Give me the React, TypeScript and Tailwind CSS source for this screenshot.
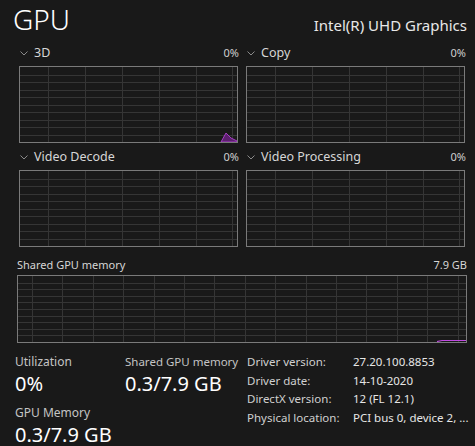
const FONT = "font-['Segoe_UI','Noto_Sans','Open_Sans',sans-serif]";

function Grid({
  w,
  h,
  cols,
  rows,
  children,
}: {
  w: number;
  h: number;
  cols: number[];
  rows: number;
  children?: React.ReactNode;
}) {
  const step = h / rows;
  return (
    <svg width={w} height={h} className="block">
      {Array.from({ length: rows - 1 }, (_, i) => (
        <line key={"r" + i} x1={0} x2={w} y1={Math.round((i + 1) * step) + 0.5} y2={Math.round((i + 1) * step) + 0.5} stroke="#353535" strokeWidth={1} />
      ))}
      {cols.map((x, i) => (
        <line key={"c" + i} x1={x + 0.5} x2={x + 0.5} y1={0} y2={h} stroke="#353535" strokeWidth={1} />
      ))}
      {children}
    </svg>
  );
}

function Chevron() {
  return (
    <svg width="8" height="5" viewBox="0 0 8 5" className="mr-[6px] mt-[1px]">
      <path d="M0.5 0.5 L4 4 L7.5 0.5" fill="none" stroke="#8a8a8a" strokeWidth="1" />
    </svg>
  );
}

const smallCols = [28, 65, 102, 139, 176, 212];

function Engine({ name, spike }: { name: string; spike?: boolean }) {
  return (
    <div className="w-[219px]">
      <div className="flex items-center justify-between h-[18px] mb-[4px]">
        <div className="flex items-center pl-[1px]">
          <Chevron />
          <span className="text-[12.5px] text-[#d6d6d6]">{name}</span>
        </div>
        <span className="text-[11px] text-[#cfcfcf] -mr-[1px]">0%</span>
      </div>
      <div className="border border-[#7a7a7a] w-[219px] h-[77px] overflow-hidden">
        <Grid w={217} h={75} cols={smallCols} rows={10}>
          {spike && (
            <path d="M201 75 L206 66 L211 71 L217 74 L217 75 Z" fill="#5c1f6e" stroke="#a43fc4" strokeWidth="1" />
          )}
        </Grid>
      </div>
    </div>
  );
}

const sharedCols = Array.from({ length: 15 }, (_, i) => Math.round(14 + i * 30.4));

export default function App() {
  return (
    <div className={`w-[475px] h-[446px] bg-[#191919] text-white overflow-hidden ${FONT}`}>
      {/* header */}
      <div className="flex items-end justify-between pl-[13px] pr-[8px] pt-[1px] h-[37px]">
        <span className="text-[28px] leading-[36px] font-light text-white">GPU</span>
        <span className="text-[15px] leading-[24px] text-[#e8e8e8]">Intel(R) UHD Graphics</span>
      </div>

      {/* engines */}
      <div className="grid grid-cols-[219px_219px] gap-x-[8px] gap-y-[5px] pl-[19px] mt-[7px]">
        <Engine name="3D" spike />
        <Engine name="Copy" />
        <Engine name="Video Decode" />
        <Engine name="Video Processing" />
      </div>

      {/* shared memory */}
      <div className="pl-[17px] w-[467px] mt-[9px]">
        <div className="flex items-center justify-between h-[18px] mb-[1px]">
          <span className="text-[11px] text-[#d6d6d6]">Shared GPU memory</span>
          <span className="text-[11px] text-[#d6d6d6]">7.9 GB</span>
        </div>
        <div className="border border-[#7a7a7a] w-[450px] h-[68px] overflow-hidden">
          <Grid w={448} h={66} cols={sharedCols} rows={10}>
            <path d="M419 65.5 L424 64.5 L448 64.5" fill="none" stroke="#c04ae0" strokeWidth="1.2" />
          </Grid>
        </div>
      </div>

      {/* stats */}
      <div className="flex items-start mt-[10px] pl-[15px]">
        <div className="w-[110px]">
          <div className="text-[12px] leading-[18px] text-[#c4c4c4]">Utilization</div>
          <div className="text-[20px] leading-[26px] text-white mb-[7px]">0%</div>
          <div className="text-[12px] leading-[18px] text-[#c4c4c4]">GPU Memory</div>
          <div className="text-[20px] leading-[26px] text-white">0.3/7.9 GB</div>
        </div>
        <div className="w-[122px]">
          <div className="text-[11.5px] leading-[18px] text-[#c4c4c4]">Shared GPU memory</div>
          <div className="text-[20px] leading-[26px] text-white">0.3/7.9 GB</div>
        </div>
        <div className="grid grid-cols-[106px_1fr] content-start text-[11.5px] leading-[18.5px] text-[#d0d0d0]">
          <span>Driver version:</span>
          <span className="text-[#e6e6e6]">27.20.100.8853</span>
          <span>Driver date:</span>
          <span className="text-[#e6e6e6]">14-10-2020</span>
          <span>DirectX version:</span>
          <span className="text-[#e6e6e6]">12 (FL 12.1)</span>
          <span>Physical location:</span>
          <span className="text-[#e6e6e6]">PCI bus 0, device 2, ...</span>
        </div>
      </div>
    </div>
  );
}
